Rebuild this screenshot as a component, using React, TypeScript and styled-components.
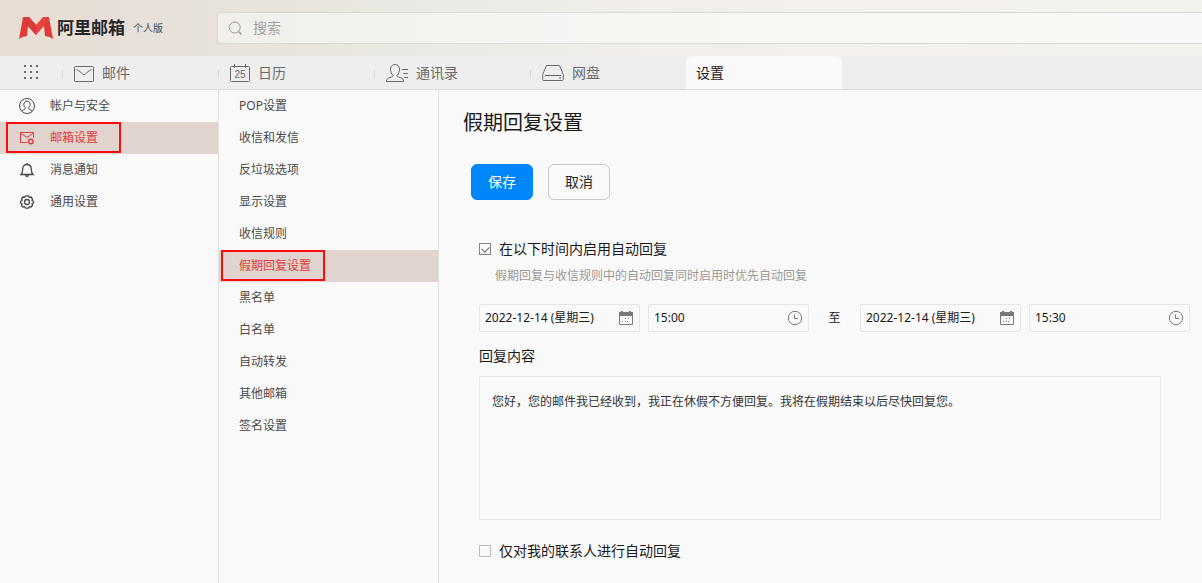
import React, { useState } from 'react';
import styled, { createGlobalStyle, css } from 'styled-components';

const GlobalStyle = createGlobalStyle`
  * { box-sizing: border-box; }
  body {
    margin: 0;
    background: #f9f9f9;
    color: #1a1a1a;
    font-family: "Noto Sans", "Noto Sans CJK SC", sans-serif;
    font-size: 12px;
    line-height: 16px;
  }
  a { color: inherit; text-decoration: none; }
  button, input, textarea { font: inherit; color: inherit; }
`;

const Page = styled.div`
  display: flex;
  flex-direction: column;
  min-height: 100vh;
  overflow-x: hidden;
`;

const Header = styled.header`
  display: flex;
  align-items: center;
  height: 56px;
  background: linear-gradient(90deg, #e7ddd5 0%, #e7e1d9 16%, #eae8e2 33%, #f2efea 55%, #f5f1ec 75%, #f3f3ee 100%);
`;

const Brand = styled.a`
  display: flex;
  align-items: center;
  width: 217px;
  padding-left: 19px;
`;

const BrandName = styled.span`
  margin-left: 4px;
  font-size: 17px;
  line-height: 24px;
  font-weight: 700;
  color: #26262a;
`;

const Edition = styled.span`
  margin-left: 8px;
  font-size: 10px;
  color: #4a4846;
`;

const SearchBox = styled.label`
  display: flex;
  flex: 1;
  align-items: center;
  gap: 9px;
  height: 32px;
  padding-left: 10px;
  border: 1px solid #dad8d3;
  border-right: 0;
  border-radius: 4px 0 0 4px;
  background: rgba(255, 255, 255, 0.45);
  color: #9c9b98;
`;

const SearchInput = styled.input`
  flex: 1;
  min-width: 0;
  padding: 0;
  border: 0;
  outline: 0;
  background: transparent;
  font-size: 14px;
  line-height: 20px;
  &::placeholder { color: #a3a29f; opacity: 1; }
`;

const TabBar = styled.nav`
  display: flex;
  height: 34px;
  background: #eeeeee;
  border-bottom: 1px solid #dddddd;
`;

const AppsButton = styled.button`
  display: flex;
  align-items: center;
  width: 62px;
  padding: 0 0 0 23px;
  border: 0;
  background: transparent;
  color: #6b6468;
`;

const Tab = styled.a<{ $active?: boolean }>`
  display: flex;
  align-items: center;
  gap: 8px;
  width: 156px;
  padding-left: 12px;
  font-size: 14px;
  line-height: 20px;
  color: #6a6a6a;
  background: linear-gradient(#d8d8d8, #d8d8d8) 0 14px / 1px 9px no-repeat;
  ${({ $active }) => $active && css`
    padding-left: 10px;
    border-radius: 6px 6px 0 0;
    background: #f9f9f9;
    color: #1a1a1a;
  `}
`;

const Body = styled.div`
  display: flex;
  flex: 1;
`;

const Column = styled.nav<{ $width: number }>`
  flex: none;
  width: ${({ $width }) => $width}px;
  border-right: 1px solid #e2e2e2;
`;

const Item = styled.a<{ $active?: boolean; $indent: number }>`
  position: relative;
  display: flex;
  align-items: center;
  gap: 15px;
  height: 32px;
  padding-left: ${({ $indent }) => $indent}px;
  color: ${({ $active }) => ($active ? '#e13c3a' : '#4a4a4a')};
  background: ${({ $active }) => ($active ? '#e1d3cd' : 'transparent')};
`;

const Marker = styled.span<{ $left: number; $width: number }>`
  position: absolute;
  top: 0;
  left: ${({ $left }) => $left}px;
  width: ${({ $width }) => $width}px;
  height: 31px;
  border: 2px solid #fb0d0d;
`;

const Main = styled.main`
  flex: 1;
  min-width: 0;
  padding: 19px 0 16px 24px;
`;

const Title = styled.h1`
  margin: 0;
  font-size: 20px;
  line-height: 28px;
  font-weight: 400;
`;

const Actions = styled.div`
  display: flex;
  gap: 15px;
  padding: 27px 0 0 8px;
`;

const ActionButton = styled.button<{ $primary?: boolean }>`
  width: 62px;
  height: 36px;
  padding: 0;
  border: 1px solid ${({ $primary }) => ($primary ? '#0086fb' : '#c8c8c8')};
  border-radius: 6px;
  background: ${({ $primary }) => ($primary ? '#0086fb' : 'transparent')};
  color: ${({ $primary }) => ($primary ? '#ffffff' : '#262626')};
  font-size: 14px;
  line-height: 20px;
`;

const Form = styled.form`
  padding: 39px 12px 0 16px;
`;

const CheckLabel = styled.label`
  display: flex;
  align-items: center;
  gap: 8px;
  font-size: 14px;
  line-height: 20px;
`;

const CheckBox = styled.input`
  appearance: none;
  display: grid;
  place-items: center;
  width: 12px;
  height: 12px;
  margin: 0;
  border: 1px solid #bdbdc4;
  &:checked { border-color: #85858c; }
  &:checked::after {
    content: "";
    width: 6px;
    height: 4px;
    margin-bottom: 2px;
    border: solid #6d6d74;
    border-width: 0 0 1px 1px;
    transform: rotate(-45deg);
  }
`;

const Hint = styled.p`
  margin: 9px 0 20px;
  padding-left: 16px;
  color: #999999;
`;

const Range = styled.div`
  display: flex;
  align-items: center;
  gap: 8px;
`;

const Until = styled.span`
  width: 35px;
  text-align: center;
`;

const Field = styled.label`
  display: flex;
  align-items: center;
  width: 161px;
  height: 28px;
  padding: 0 5px;
  border: 1px solid #e6e6e6;
  border-radius: 2px;
  color: #7a787a;
`;

const FieldInput = styled.input`
  flex: 1;
  min-width: 0;
  padding: 0;
  border: 0;
  outline: 0;
  background: transparent;
  color: #1a1a1a;
`;

const ReplyLabel = styled.label`
  display: block;
  margin: 14px 0 10px;
  font-size: 14px;
  line-height: 20px;
`;

const ReplyText = styled.textarea`
  display: block;
  width: calc(100% - 29px);
  height: 144px;
  margin-bottom: 21px;
  padding: 17px 12px;
  border: 1px solid #e6e6e6;
  border-radius: 1px;
  outline: 0;
  resize: none;
  background: transparent;
  color: #333333;
`;

const Logo = () => (
  <svg width="34" height="22" viewBox="0 0 34 22" aria-hidden="true">
    <path d="M4 0 L9 9 L8 19 Q3 19.500 0 22 Z" fill="#e33c37" />
    <path d="M30 0 L25 9 L26 19 Q31 19.500 34 22 Z" fill="#e33c37" />
    <path d="M4 0 H10 L8.500 10 Q7 5 4 0 Z" fill="#9f2429" />
    <path d="M30 0 H24 L25.500 10 Q27 5 30 0 Z" fill="#b72b2e" />
    <path d="M5 0 H10 L17 8 L24 0 H29 L25 9 L17 18 L9 9 Z" fill="#e8443d" />
    <path d="M5 0 H10 L17 8 V18 L9 9 Z" fill="#d93a36" />
  </svg>
);

const SearchIcon = () => (
  <svg width="16" height="16" viewBox="0 0 16 16" fill="none" stroke="currentColor" aria-hidden="true">
    <circle cx="6.700" cy="7.500" r="5.500" />
    <path d="M10.500 11.500 L13.500 14.500" strokeWidth="1.400" />
  </svg>
);

const GridIcon = () => (
  <svg width="16" height="16" viewBox="0 0 16 16" fill="currentColor" aria-hidden="true">
    {[1, 7, 13].map((y) => [1, 7, 13].map((x) => <rect key={`${x}-${y}`} x={x} y={y - 1} width="2" height="2" />))}
  </svg>
);

const MailIcon = () => (
  <svg width="20" height="18" viewBox="0 0 20 18" fill="none" stroke="currentColor" aria-hidden="true">
    <rect x="0.5" y="2.500" width="19" height="15" rx="1" />
    <path d="M2.500 5 L10 11 L17.500 5" />
  </svg>
);

const DayIcon = () => (
  <svg width="20" height="18" viewBox="0 0 20 18" fill="none" stroke="currentColor" aria-hidden="true">
    <rect x="0.5" y="2.500" width="19" height="15" rx="1" />
    <path d="M4.500 0 V4 M15.500 0 V4" />
    <text x="10" y="14" textAnchor="middle" fontSize="10" fontFamily="Liberation Sans, sans-serif" fill="currentColor" stroke="none">25</text>
  </svg>
);

const ContactsIcon = () => (
  <svg width="22" height="18" viewBox="0 0 22 18" fill="none" stroke="currentColor" aria-hidden="true">
    <path d="M7 11.500 C5 9.500 4.500 7.500 4.500 5 C4.500 2 6.500 .5 9 .5 S13.500 2 13.500 5 C13.500 7.500 13 9.500 11 11.500 C11 12.500 12 13 14 13.500 C16.500 14.300 17.500 15 17.500 17.500 H.5 C.5 15 1.500 14.300 4 13.500 C6 13 7 12.500 7 11.500 Z" />
    <path d="M16 5.500 H22 M17.500 9.500 H22 M18 13.500 H22" />
  </svg>
);

const DiskIcon = () => (
  <svg width="22" height="18" viewBox="0 0 22 18" fill="none" stroke="currentColor" aria-hidden="true">
    <path d="M4.500 1.500 H17.500 L21.300 10.500 V15.500 Q21.300 16.500 20.300 16.500 H1.700 Q.7 16.500 .7 15.500 V10.500 Z" />
    <path d="M3 11.500 H19" />
    <path d="M17 14 H19" />
  </svg>
);

const AccountIcon = () => (
  <svg width="16" height="16" viewBox="0 0 16 16" fill="none" stroke="currentColor" aria-hidden="true">
    <circle cx="8" cy="8" r="7.500" />
    <path d="M2.800 13.200 C4 11.500 6.500 11.500 6.500 9.800 C5.300 9 4.800 7.800 4.800 6.400 C4.800 4.400 6.200 3.200 8 3.200 S11.200 4.400 11.200 6.400 C11.200 7.800 10.700 9 9.500 9.800 C9.500 11.500 12 11.500 13.200 13.200" />
  </svg>
);

const MailSettingsIcon = () => (
  <svg width="16" height="16" viewBox="0 0 16 16" fill="none" stroke="currentColor" aria-hidden="true">
    <path d="M8 12.500 H1.500 V2.500 H14.500 V8" />
    <path d="M1.500 3 L8 7.500 L14.500 3" />
    <circle cx="11.800" cy="11.500" r="2.300" strokeWidth="1.400" />
  </svg>
);

const BellIcon = () => (
  <svg width="16" height="16" viewBox="0 0 16 16" fill="none" stroke="currentColor" strokeWidth="1.300" aria-hidden="true">
    <path d="M2 12.500 C3.500 11 3.700 10 3.700 7 C3.700 4.200 5.500 2.500 8 2.500 S12.300 4.200 12.300 7 C12.300 10 12.500 11 14 12.500 Z" />
    <path d="M8 1 V2.500 M6.500 13 Q8 16 9.500 13" />
  </svg>
);

const GearIcon = () => (
  <svg width="16" height="16" viewBox="0 0 16 16" fill="none" stroke="currentColor" strokeWidth="1.300" strokeLinejoin="round" aria-hidden="true">
    <path d="M6.500 1.800 H9.500 L10.300 3.400 L12 3 L13.500 5 L13 6.500 L14.500 7.300 V9 L13 9.600 L13.500 11.300 L12 13 L10.300 12.600 L9.500 14.200 H6.500 L5.700 12.600 L4 13 L2.500 11.300 L3 9.600 L1.500 9 V7.300 L3 6.500 L2.500 5 L4 3 L5.700 3.400 Z" />
    <circle cx="8" cy="8" r="2.500" />
  </svg>
);

const CalendarIcon = () => (
  <svg width="16" height="16" viewBox="0 0 16 16" aria-hidden="true">
    <path d="M1 2 H15 V6 H1 Z M3 1 H5 V3 H3 Z M11 1 H13 V3 H11 Z" fill="currentColor" />
    <path d="M1.500 5 V14.500 H14.500 V5" fill="none" stroke="currentColor" />
    <path d="M7 8 h1 v1 h-1 Z M10 8 h1 v1 h-1 Z M4 11 h1 v1 h-1 Z M7 11 h1 v1 h-1 Z M9 11 h1 v1 h-1 Z" fill="currentColor" />
  </svg>
);

const ClockIcon = () => (
  <svg width="16" height="16" viewBox="0 0 16 16" fill="none" stroke="currentColor" aria-hidden="true">
    <circle cx="8" cy="8" r="6.700" />
    <path d="M7.500 4.500 V8.500 H11" />
  </svg>
);

const sections = [
  { name: '帐户与安全', icon: <AccountIcon /> },
  { name: '邮箱设置', icon: <MailSettingsIcon />, active: true },
  { name: '消息通知', icon: <BellIcon /> },
  { name: '通用设置', icon: <GearIcon /> },
];

const mailSettings = [
  'POP设置', '收信和发信', '反垃圾选项', '显示设置', '收信规则', '假期回复设置',
  '黑名单', '白名单', '自动转发', '其他邮箱', '签名设置',
];

function DateField({ name, value }: { name: string; value: string }) {
  return (
    <Field>
      <FieldInput aria-label={name} defaultValue={value} />
      <CalendarIcon />
    </Field>
  );
}

function TimeField({ name, value }: { name: string; value: string }) {
  return (
    <Field>
      <FieldInput aria-label={name} defaultValue={value} />
      <ClockIcon />
    </Field>
  );
}

export default function App() {
  const [enabled, setEnabled] = useState(true);
  const [contactsOnly, setContactsOnly] = useState(false);

  return (
    <Page>
      <GlobalStyle />
      <Header>
        <Brand href="#">
          <Logo />
          <BrandName>阿里邮箱</BrandName>
          <Edition>个人版</Edition>
        </Brand>
        <SearchBox>
          <SearchIcon />
          <SearchInput type="text" placeholder="搜索" aria-label="搜索" />
        </SearchBox>
      </Header>
      <TabBar>
        <AppsButton type="button" aria-label="应用"><GridIcon /></AppsButton>
        <Tab href="#"><MailIcon />邮件</Tab>
        <Tab href="#"><DayIcon />日历</Tab>
        <Tab href="#"><ContactsIcon />通讯录</Tab>
        <Tab href="#"><DiskIcon />网盘</Tab>
        <Tab href="#" $active>设置</Tab>
      </TabBar>
      <Body>
        <Column $width={219}>
          {sections.map(({ name, icon, active }) => (
            <Item key={name} href="#" $indent={19} $active={active}>
              {icon}
              {name}
              {active && <Marker $left={6} $width={115} />}
            </Item>
          ))}
        </Column>
        <Column $width={220}>
          {mailSettings.map((name) => {
            const active = name === '假期回复设置';
            return (
              <Item key={name} href="#" $indent={20} $active={active}>
                {name}
                {active && <Marker $left={2} $width={104} />}
              </Item>
            );
          })}
        </Column>
        <Main>
          <Title>假期回复设置</Title>
          <Actions>
            <ActionButton type="submit" form="vacation" $primary>保存</ActionButton>
            <ActionButton type="button">取消</ActionButton>
          </Actions>
          <Form id="vacation" onSubmit={(e) => e.preventDefault()}>
            <CheckLabel>
              <CheckBox type="checkbox" checked={enabled} onChange={(e) => setEnabled(e.target.checked)} />
              在以下时间内启用自动回复
            </CheckLabel>
            <Hint>假期回复与收信规则中的自动回复同时启用时优先自动回复</Hint>
            <Range>
              <DateField name="开始日期" value="2022-12-14 (星期三)" />
              <TimeField name="开始时间" value="15:00" />
              <Until>至</Until>
              <DateField name="结束日期" value="2022-12-14 (星期三)" />
              <TimeField name="结束时间" value="15:30" />
            </Range>
            <ReplyLabel htmlFor="reply">回复内容</ReplyLabel>
            <ReplyText id="reply" defaultValue="您好，您的邮件我已经收到，我正在休假不方便回复。我将在假期结束以后尽快回复您。" />
            <CheckLabel>
              <CheckBox type="checkbox" checked={contactsOnly} onChange={(e) => setContactsOnly(e.target.checked)} />
              仅对我的联系人进行自动回复
            </CheckLabel>
          </Form>
        </Main>
      </Body>
    </Page>
  );
}
